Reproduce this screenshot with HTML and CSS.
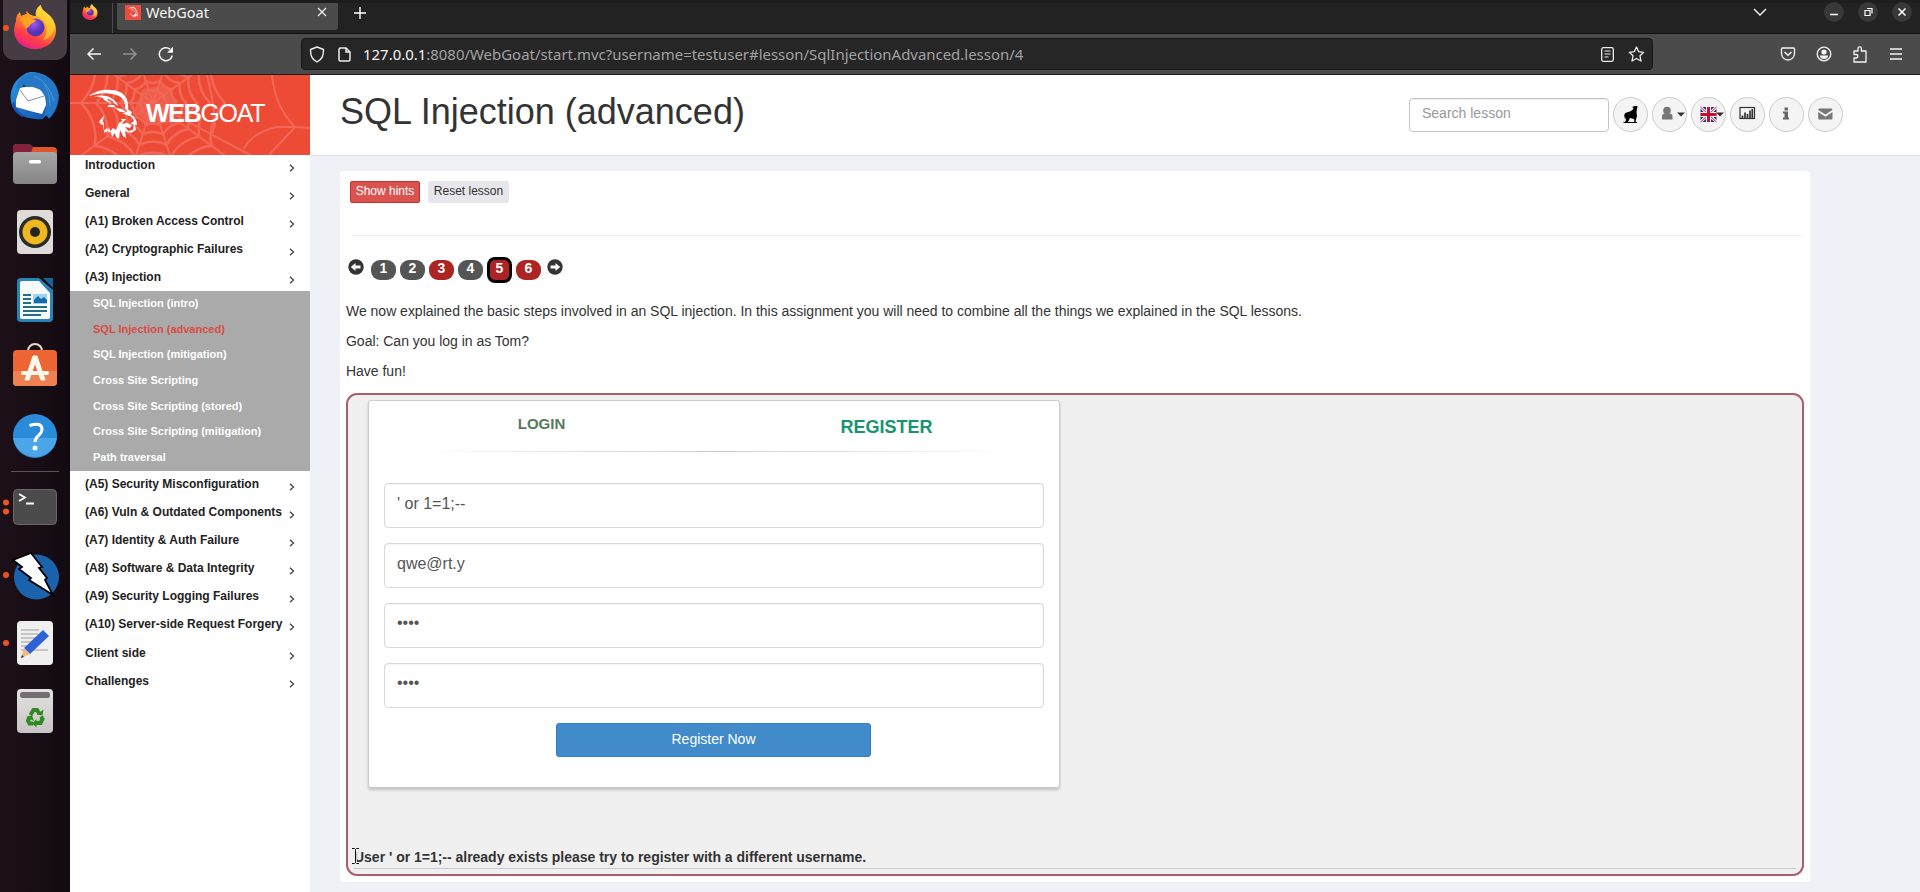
FILE: index.html
```html
<!DOCTYPE html>
<html lang="en">
<head>
<meta charset="utf-8">
<title>WebGoat</title>
<link rel="stylesheet" href="styles.css">
</head>
<body>
<svg class="defs" width="0" height="0" aria-hidden="true">
  <defs>
    <linearGradient id="fox" x1="0.8" y1="0" x2="0.3" y2="1"><stop offset="0" stop-color="#fff14a"/><stop offset=".4" stop-color="#ff9b21"/><stop offset=".75" stop-color="#ff3d48"/><stop offset="1" stop-color="#e5208b"/></linearGradient>
    <radialGradient id="globe" cx=".4" cy=".3"><stop offset="0" stop-color="#a05bf0"/><stop offset="1" stop-color="#5532b8"/></radialGradient>
    <linearGradient id="bird" x1="0" y1="0" x2="1" y2="1"><stop offset="0" stop-color="#2b9be6"/><stop offset="1" stop-color="#1449a8"/></linearGradient>
    <linearGradient id="steel" x1="0" y1="0" x2="0" y2="1"><stop offset="0" stop-color="#a6a6a6"/><stop offset="1" stop-color="#858585"/></linearGradient>
    <linearGradient id="paper" x1="0" y1="0" x2="0" y2="1"><stop offset="0" stop-color="#e4e2e1"/><stop offset="1" stop-color="#c8c5c4"/></linearGradient>
    <symbol id="firefox" viewBox="0 0 42 44">
      <path d="M2 16C2 12 3 9 6 7l1 4c2-1 4-2 6-2-1-1-1-2 0-3 1 3 4 4 7 5h2c-1-5 1-9 5-11 0 5 4 6 8 10 4 3 7 9 7 15 0 11-9 19-21 19S0 36 0 25c0-3 1-6 2-9z" fill="url(#fox)"/>
      <circle cx="21.500" cy="22.500" r="9" fill="url(#globe)"/>
      <path d="M6 14c4-3 8-2 11 0l5 1c-1 3-5 3-6 5-1 3-3 2-4 4-2-4-4-6-6-10z" fill="#ffa125"/>
      <path d="M22 11c0-5 2-9 5-11 0 5 4 6 8 10 3 3 5 7 6 12-2 7-6 12-12 13 4-5 5-12 2-17-2-4-5-6-9-7z" fill="#ffd938" opacity=".65"/>
    </symbol>
    <symbol id="chev" viewBox="0 0 6 8"><path d="M1 .8 4.500 4 1 7.200" fill="none" stroke="#444" stroke-width="1.300"/></symbol>
    <path id="ring" d="M100 0Q76 25 81 59Q47 65 31 95Q0 80-31 95Q-47 65-81 59Q-76 25-100 0Q-76-25-81-59Q-47-65-31-95Q0-80 31-95Q47-65 81-59Q76-25 100 0z" vector-effect="non-scaling-stroke"/>
    <g id="goat">
      <path d="M1 7C9 0 23-1 32 3c6 3 9 9 8 18l-3-1c1-7-3-13-9-14C19 3 10 4 1 7z"/>
      <path d="M5 8c6-2 13-2 18 1 4 2 6 5 7 8l-4-3c-2-3-4-4-7-4l3 4-6-3-1-2c-3-1-6-2-10-1z"/>
      <path d="M21 11l1 4-3 3 7 0 6 5 6 0-4-3-6-1-2-3-5 0 2-2z"/>
      <path d="M38 19l6 4-1 3c4 2 6 6 6 10l-2 0 1 5-5 3-3-2 5-1 1-5-3-2 3-2c-1-3-3-5-5-5l-7-3 5-1z"/>
      <path d="M16 26c-2 4-4 4-5 8l5-1c-1 4 1 7 0 11l4-2 1-4 2 6 1 4 3-4 1 4 3 2 1-9 3 6 3 2-1-7 5 2-5-6 5-1-2-3-6 1 2-4-5 3-3 7-3-2-4 5-2-5-3 3-1-6-3-1 3-3z"/>
      <path d="M33 30l5 0-3 3zM38 34l6 2-2 3-5-1z"/>
    </g>
  </defs>
</svg>
<div class="desktop">
  <nav class="dock">
    <div class="active-app"><svg width="70" height="62" viewBox="0 0 70 62"><rect x="3" y="-14" width="64" height="74" rx="11" fill="#463c44"/><circle cx="6" cy="28" r="3" fill="#e95420"/><use href="#firefox" x="14" y="5" width="42" height="44"/></svg></div>
    <svg width="70" height="69" viewBox="0 62 70 69"><path d="M30 72c13-1 28 8 29 24 0 8-4 18-10 23l-3-4-3 4c-6 1-20-1-26-6-9-9-8-24 0-33 4-4 8-7 13-8z" fill="url(#bird)"/><path d="M20 88l-4 12 0 7 14 4 12 3 4-9-1-14-12-4-14 0z" fill="#fff"/><path d="M20 90l8 11 16-5" stroke="#8795a5" fill="none"/><path d="M16 90c1-10 8-17 19-17 12 1 23 10 23 23 0 9-4 18-9 22l-3-3-3 3c3-7 5-16 1-23-4-9-15-9-20-8-4 1-6 2-8 3z" fill="#2478c6"/><path d="M34 76q14 5 20 25M44 84q6 8 6 22" stroke="#4597dc" fill="none"/><path d="M14 102q2 10 12 14l-4 1q-8-5-10-13z" fill="#1a51ab"/><circle cx="24" cy="86" r="1.300" fill="#123b62"/></svg>
    <svg width="70" height="67" viewBox="0 131 70 67"><path d="M13 148q0-4 4-4h12l4 3h20q4 0 4 4v10H13z" fill="#e0562b"/><path d="M13 148q0-4 4-4h12l4 3-3 8H13z" fill="#82223c"/><rect x="13" y="152" width="44" height="32" rx="4" fill="url(#steel)"/><rect x="29" y="160" width="12" height="3.500" rx="1.500" fill="#fff"/></svg>
    <svg width="70" height="68" viewBox="0 198 70 68"><rect x="17" y="210" width="36" height="44" rx="4" fill="#dedbd8"/><circle cx="35" cy="232" r="16" fill="#2b2b2b"/><circle cx="35" cy="232" r="12.500" fill="#eeb91f"/><circle cx="35" cy="232" r="5" fill="#252525"/></svg>
    <svg width="70" height="67" viewBox="0 266 70 67"><path d="M17 282q0-4 4-4h18l14 12v28q0 4-4 4H21q-4 0-4-4z" fill="#2a83b5"/><path d="M20 283q0-2 2-2h17l11 12v24q0 2-2 2H22q-2 0-2-2z" fill="#f7fafb"/><path d="M43 278h10v10z" fill="#13679a"/><path d="M23 295h8m-8 4h8m-8 4h8m-8 4h24m-24 4h24m-24 4h18" stroke="#246f87" stroke-width="2"/><rect x="33" y="294" width="14" height="10" fill="#9fd3ee"/><path d="M34 303v-3l4-4 3 3 3-2 3 3v3z" fill="#1769aa"/></svg>
    <svg width="70" height="68" viewBox="0 333 70 68"><path d="M28 353v-2a7 7 0 0 1 14 0v2" fill="none" stroke="#e9d8c4" stroke-width="2"/><rect x="13" y="350" width="44" height="36" rx="4" fill="#ed6532"/><path d="M13 371h44v11q0 4-4 4H17q-4 0-4-4z" fill="#ee8051"/><path d="M33 356h4l8 24h-4l-6-17-6 17h-4z" fill="#fff8ec" stroke="#fff8ec"/><path d="M23 373h24" fill="none" stroke="#fff8ec" stroke-width="4" stroke-linecap="round"/></svg>
    <svg width="70" height="70" viewBox="0 401 70 70"><circle cx="35" cy="436" r="22" fill="#2b8bdb"/><path d="M13.200 438h43.600A22 22 0 0 1 13.200 438z" fill="#4aa6e8"/><path d="M29.500 425.500q12.500-4 12.500 4c0 6-7 6-7 12.500" fill="none" stroke="#fff" stroke-width="3"/><circle cx="35" cy="448" r="2.500" fill="#fff"/></svg>
    <div class="dock-rule"></div>
    <svg width="70" height="69" viewBox="0 472 70 69"><rect x="13.500" y="489.500" width="43" height="35" rx="4" fill="#4b4b4b" stroke="#6b6568"/><path d="M19 494l6 3.500-6 3.500M26 503.500h8" fill="none" stroke="#fff" stroke-width="1.800"/><circle cx="6" cy="502.500" r="3" fill="#e95420"/><circle cx="6" cy="511.500" r="3" fill="#e95420"/></svg>
    <svg width="70" height="69" viewBox="0 541 70 69"><circle cx="36.500" cy="577" r="22.500" fill="#1c63ae"/><path d="M13 560l18-7 11 14-3 1 8 10-2 2 8 15-24-15 2-2-12-9 3-2z" fill="#fff" stroke="#000" stroke-width="1.800"/><circle cx="6" cy="575" r="3" fill="#e95420"/></svg>
    <svg width="70" height="67" viewBox="0 610 70 67"><rect x="17" y="621" width="36" height="44" rx="4" fill="#efefef"/><path d="M21 630h18m-18 4h17m-17 4h15m-15 4h12m-12 4h9m-9 4h27" stroke="#b9b9b9" stroke-width="1.300"/><path d="M43 630l6 6-19 18-6-6z" fill="#2f62d4"/><path d="M24 648l6 6-9 4z" fill="#ecb98a"/><path d="M22 655l2 2-3 1z" fill="#333"/><circle cx="6" cy="643" r="3" fill="#e95420"/></svg>
    <svg width="70" height="68" viewBox="0 677 70 68"><rect x="17" y="689" width="36" height="44" rx="4" fill="url(#paper)"/><rect x="20" y="692" width="30" height="6" rx="2.500" fill="#746f72"/><g fill="none" stroke="#2f8a22" stroke-width="4"><path d="M30.500 715l3-5h3.500l2.500 4"/><path d="M41 716.500l1.500 2.500-2 4H36"/><path d="M33 723.500h-3.500l-1.500-3 1.500-3"/></g><path d="M36.500 714.500l6 1 1-6zM36.500 719v8.500l-4.500-4zM26 717l6-2 2 6z" fill="#2f8a22"/></svg>
  </nav>

  <div class="browser">
    <div class="tabstrip">
      <div class="pinned"><svg width="16" height="16"><use href="#firefox" width="16" height="16"/></svg></div>
      <div class="tab">
        <svg class="favicon" width="16" height="15" viewBox="0 0 16 15"><rect width="16" height="15" fill="#ed4d40"/><g fill="#fff" transform="translate(3 2) scale(.21)"><use href="#goat"/></g></svg>
        <span class="tab-name">WebGoat</span>
        <svg width="10" height="10" viewBox="0 0 10 10"><path d="M1 1l8 8M9 1L1 9" stroke="#eee" stroke-width="1.200"/></svg>
      </div>
      <svg class="new-tab" width="12" height="12" viewBox="0 0 12 12"><path d="M6 0v12M0 6h12" stroke="#fff" stroke-width="1.400"/></svg>
      <svg class="tab-list" width="14" height="8" viewBox="0 0 14 8"><path d="M1 1l6 6 6-6" fill="none" stroke="#eee" stroke-width="1.500"/></svg>
      <div class="window-buttons">
        <svg width="20" height="20"><circle cx="10" cy="10" r="10" fill="#383838"/><path d="M6 12.500h8" stroke="#fff" stroke-width="1.500"/></svg>
        <svg width="20" height="20"><circle cx="10" cy="10" r="10" fill="#383838"/><path d="M7 8.500h5v5H7zM9 6.500h5v5" fill="none" stroke="#fff" stroke-width="1.200"/></svg>
        <svg width="20" height="20"><circle cx="10" cy="10" r="10" fill="#383838"/><path d="M6.500 6.500l7 7M13.500 6.500l-7 7" stroke="#fff" stroke-width="1.500"/></svg>
      </div>
    </div>
    <div class="navbar">
      <svg class="back" width="14" height="12" viewBox="0 0 14 12"><path d="M14 6H1M6.500 .5L1 6l5.500 5.500" fill="none" stroke="#f5f5f5" stroke-width="1.500"/></svg>
      <svg class="forward" width="14" height="12" viewBox="0 0 14 12"><path d="M0 6h13M7.500 .5L13 6l-5.500 5.500" fill="none" stroke="#929292" stroke-width="1.500"/></svg>
      <svg class="reload" width="16" height="16" viewBox="0 0 16 16"><path d="M14.200 9.500A6.500 6.500 0 1 1 12 3.200" fill="none" stroke="#f5f5f5" stroke-width="1.500"/><path d="M15 .8v6H9z" fill="#f5f5f5"/></svg>
      <div class="urlbar">
        <svg width="16" height="17" viewBox="0 0 16 17"><path d="M8 1l6.500 2.500c0 6-1 9.500-6.500 12.500C2.500 13 1.500 9.500 1.500 3.500z" fill="none" stroke="#eee" stroke-width="1.400" stroke-linejoin="round"/></svg>
        <svg class="doc" width="13" height="15" viewBox="0 0 13 15"><path d="M2.500 1h5.500l4 4v7.500q0 1.500-1.500 1.500h-8Q1 14 1 12.500v-10Q1 1 2.500 1zM8 1v4h4" fill="none" stroke="#eee" stroke-width="1.500"/></svg>
        <span class="url"><b>127.0.0.1</b>:8080/WebGoat/start.mvc?username=testuser#lesson/SqlInjectionAdvanced.lesson/4</span>
        <svg class="reader" width="13" height="15" viewBox="0 0 13 15"><rect x=".7" y=".7" width="11.600" height="13.600" rx="1.500" fill="none" stroke="#eee" stroke-width="1.300"/><path d="M3.500 4h6m-6 3h6m-6 3h4" stroke="#eee"/></svg>
        <svg width="17" height="16" viewBox="0 0 17 16"><path d="M8.500 1l2.200 4.700 5 .6-3.700 3.500 1 5.200-4.500-2.500L4 15l1-5.200-3.700-3.500 5-.6z" fill="none" stroke="#eee" stroke-width="1.300" stroke-linejoin="round"/></svg>
      </div>
      <div class="tools">
        <svg width="16" height="16" viewBox="0 0 16 16"><path d="M2.500 2h11q1 0 1 1v4.500a6.500 6.500 0 0 1-13 0V3q0-1 1-1z" fill="none" stroke="#f5f5f5" stroke-width="1.300"/><path d="M4.500 6L8 9.300 11.500 6" fill="none" stroke="#f5f5f5" stroke-width="1.500"/></svg>
        <svg width="16" height="16" viewBox="0 0 16 16"><circle cx="8" cy="8" r="6.800" fill="none" stroke="#f5f5f5" stroke-width="1.300"/><circle cx="8" cy="6" r="2.600" fill="#f5f5f5"/><path d="M3.700 9.500h8.600q-.8 3.500-4.300 3.500T3.700 9.500z" fill="#f5f5f5"/></svg>
        <svg width="16" height="17" viewBox="0 0 16 17"><path d="M2 16v-4h2.500a1.800 1.800 0 0 0 0-3.500H2V5h4V2.500a1.700 1.700 0 0 1 3.400 0V5H14v11z" fill="none" stroke="#f5f5f5" stroke-width="1.300" stroke-linejoin="round"/></svg>
        <svg width="16" height="16" viewBox="0 0 16 16"><path d="M2 3h12M2 8h12M2 13h12" stroke="#f5f5f5" stroke-width="1.400"/></svg>
      </div>
    </div>

    <div class="page">
      <aside class="sidebar">
        <div class="brand">
          <svg class="web" width="240" height="80" viewBox="0 0 240 80" aria-hidden="true"><g fill="none" stroke="#f16858" stroke-width="2"><g transform="translate(83 28)"><g stroke-width="2.500"><use href="#ring" transform="scale(.14)"/><use href="#ring" transform="scale(.23)"/><use href="#ring" transform="scale(.33)"/><use href="#ring" transform="scale(.44)"/><use href="#ring" transform="scale(.57)"/><use href="#ring" transform="scale(.72)"/></g><path d="M-100 0H0L140 75M0 0l81 59M0 0l31 95M0 0l-31 95M0 0l-81 59M0 0l-81-59M0 0l-31-95M0 0l31-95M0 0l81-59"/></g><path d="M174 74q6-15 32-22l19 0 15 1M225 52q-20-20-23-52M137 0q8 34 8 50l-5 15M199 80l26-28"/></g><path d="M72 14l22-4 14 16-6 22-22 2-16-14z" fill="#f06554" opacity=".7"/></svg>
          <svg class="goat" width="50" height="51" viewBox="0 0 50 51" fill="#fff"><use href="#goat"/></svg>
          <span class="brand-name"><b>WEB</b>GOAT</span>
        </div>
        <ul class="menu">
          <li>Introduction<svg width="6" height="8"><use href="#chev"/></svg></li>
          <li>General<svg width="6" height="8"><use href="#chev"/></svg></li>
          <li>(A1) Broken Access Control<svg width="6" height="8"><use href="#chev"/></svg></li>
          <li>(A2) Cryptographic Failures<svg width="6" height="8"><use href="#chev"/></svg></li>
          <li>(A3) Injection<svg width="6" height="8"><use href="#chev"/></svg></li>
        </ul>
        <ul class="submenu">
          <li>SQL Injection (intro)</li>
          <li class="selected">SQL Injection (advanced)</li>
          <li>SQL Injection (mitigation)</li>
          <li>Cross Site Scripting</li>
          <li>Cross Site Scripting (stored)</li>
          <li>Cross Site Scripting (mitigation)</li>
          <li>Path traversal</li>
        </ul>
        <ul class="menu rest">
          <li>(A5) Security Misconfiguration<svg width="6" height="8"><use href="#chev"/></svg></li>
          <li>(A6) Vuln &amp; Outdated Components<svg width="6" height="8"><use href="#chev"/></svg></li>
          <li>(A7) Identity &amp; Auth Failure<svg width="6" height="8"><use href="#chev"/></svg></li>
          <li>(A8) Software &amp; Data Integrity<svg width="6" height="8"><use href="#chev"/></svg></li>
          <li>(A9) Security Logging Failures<svg width="6" height="8"><use href="#chev"/></svg></li>
          <li>(A10) Server-side Request Forgery<svg width="6" height="8"><use href="#chev"/></svg></li>
          <li>Client side<svg width="6" height="8"><use href="#chev"/></svg></li>
          <li>Challenges<svg width="6" height="8"><use href="#chev"/></svg></li>
        </ul>
      </aside>

      <div class="content">
        <header class="topbar">
          <h1>SQL Injection (advanced)</h1>
          <div class="actions">
            <input class="search" placeholder="Search lesson">
            <span class="round"><svg width="33" height="33" viewBox="0 0 33 33"><path d="M23.500 8l-1 6 .5 4-1.500 5.500 2 1.500h-3l-.5-4-4-1-2 4h-3l1-2-1-3-1.500 5H23v1H9.500l1-5c-.5-4 0-5 3.500-6 3-.5 5-2 5.500-4l-1.500-1 3-1z" fill="#000"/></svg></span>
            <span class="round"><svg width="33" height="33" viewBox="0 0 33 33"><circle cx="14" cy="12.500" r="3.800" fill="#777"/><path d="M9 21.500v-3q0-3 3-3 2 1.500 4 0 3.500 0 3.500 3v3z" fill="#777"/><path d="M24 14.500h8l-4 4z" fill="#333"/></svg></span>
            <span class="round"><svg width="33" height="33" viewBox="0 0 33 33"><rect x="8.500" y="9" width="16" height="15" fill="#1d3173"/><path d="M8.500 9l16 15M24.500 9l-16 15" stroke="#fff" stroke-width="3"/><path d="M8.500 9l16 15M24.500 9l-16 15" stroke="#c8102e" stroke-width="1"/><path d="M16.500 9v15M8.500 16.500h16" stroke="#fff" stroke-width="5"/><path d="M16.500 9v15M8.500 16.500h16" stroke="#c8102e" stroke-width="3"/><path d="M24 14.500h8l-4 4z" fill="#333"/></svg></span>
            <span class="round"><svg width="33" height="33" viewBox="0 0 33 33"><rect x="9" y="9.500" width="14.500" height="11" fill="none" stroke="#333" stroke-width="1.200"/><path d="M11.500 20v-2.500M14 20v-5.500M16.500 20v-4M19 20v-7.500M21.300 20v-9" stroke="#333" stroke-width="1.700"/></svg></span>
            <span class="round"><svg width="33" height="33" viewBox="0 0 33 33"><path d="M14.500 9.500H18v3h-3.500zM13 13.500h5v6h1v2h-6v-2h1.500v-4H13z" fill="#666"/></svg></span>
            <span class="round"><svg width="33" height="33" viewBox="0 0 33 33"><path d="M10 10.500h12.500q1 0 .8 1.500L16.500 16.500 9.200 12q-.2-1.500.8-1.500z" fill="#777"/><path d="M9.200 14l7.300 4.700 7-4.700v6.500q0 1-1 1H10q-.8 0-.8-1z" fill="#777"/></svg></span>
          </div>
        </header>

        <main class="card">
          <div class="buttons"><button class="hint">Show hints</button><button class="reset">Reset lesson</button></div>
          <div class="divider"></div>
          <div class="pager">
            <svg class="arrow prev" width="16" height="16" viewBox="0 0 16 16"><circle cx="8" cy="8" r="7.700" fill="#333"/><path d="M2.800 8L7.500 4v2.500H12.500v3H7.500V12z" fill="#fff"/></svg>
            <span class="pg">1</span><span class="pg">2</span><span class="pg red">3</span><span class="pg">4</span><span class="pg red current">5</span><span class="pg red">6</span>
            <svg class="arrow next" width="16" height="16" viewBox="0 0 16 16"><circle cx="8" cy="8" r="7.700" fill="#333"/><path d="M13.200 8L8.500 4v2.500H3.500v3H8.500V12z" fill="#fff"/></svg>
          </div>
          <p>We now explained the basic steps involved in an SQL injection. In this assignment you will need to combine all the things we explained in the SQL lessons.</p>
          <p>Goal: Can you log in as Tom?</p>
          <p>Have fun!</p>
          <section class="attack">
            <form class="panel">
              <div class="switch"><span class="login">LOGIN</span><span class="register">REGISTER</span></div>
              <div class="fade"></div>
              <div class="field">' or 1=1;--</div>
              <div class="field">qwe@rt.y</div>
              <div class="field secret">••••</div>
              <div class="field secret">••••</div>
              <button class="submit" type="button">Register Now</button>
            </form>
            <div class="feedback">User ' or 1=1;-- already exists please try to register with a different username.
              <svg class="ibeam" width="7" height="16" viewBox="0 0 7 16"><path d="M0 .5h2.500l1 1 1-1H7M3.500 1.500v13M0 15.500h2.500l1-1 1 1H7" fill="none" stroke="#f8f8f8" stroke-width="2.500"/><path d="M0 .5h2.500l1 1 1-1H7M3.500 1.500v13M0 15.500h2.500l1-1 1 1H7" fill="none" stroke="#111"/></svg>
            </div>
          </section>
        </main>
      </div>
    </div>
  </div>
</div>
</body>
</html>
```

FILE: styles.css
```css
* { box-sizing: border-box; }
body { margin: 0; overflow: hidden; font-family: "Liberation Sans", Arial, sans-serif; font-size: 14px; color: #333; }
svg { display: block; flex: none; }
.defs { position: absolute; }
ul { margin: 0; padding: 0; list-style: none; }
button { font-family: inherit; padding: 0; }
.desktop { display: flex; width: 1920px; height: 892px; overflow: hidden; }

.dock { width: 70px; flex: none; background: linear-gradient(90deg, #1d1119, #170d15 60%, #120a10); }
.dock-rule { height: 1px; margin: 0 11px; background: #5a5358; }

.browser { flex: 1; display: flex; flex-direction: column; min-width: 0; }
.tabstrip { height: 34px; display: flex; align-items: flex-start; background: #222; border-top: 3px solid #1d1d1d; border-bottom: 1px solid #121212; padding-right: 8px; }
.pinned { width: 43px; height: 30px; padding: 1px 0 0 12px; border-right: 1px solid #4a4a4a; }
.tab { width: 221px; height: 27px; margin-left: 4px; background: #4b4b4b; border-radius: 0 0 3px 3px; display: flex; align-items: center; padding: 0 11px 9px 8px; }
.tab-name { flex: 1; margin-left: 5px; color: #f5f5f5; font: 14.5px/18px "Noto Sans", sans-serif; }
.new-tab { margin: 4px auto 0 16px; }
.tab-list { margin: 5px 57px 0 0; }
.window-buttons { display: flex; gap: 14px; margin-top: -1px; }

.navbar { height: 41px; display: flex; align-items: center; background: #4b4b4b; border-bottom: 1px solid #1c1c1c; padding: 0 16px 0 17px; }
.forward { margin-left: 22px; }
.reload { margin-left: 21px; }
.urlbar { width: 1352px; height: 32px; margin-left: 127px; border: 1px solid #191919; border-radius: 4px; background: #262626; display: flex; align-items: center; padding: 0 7px; }
.doc { margin-left: 13px; }
.url { flex: 1; margin-left: 12px; color: #a2a2a2; font: 14.95px/20px "Noto Sans", sans-serif; white-space: nowrap; }
.url b { color: #f5f5f5; font-weight: 400; }
.reader { margin-right: 14px; }
.tools { display: flex; gap: 20px; margin-left: auto; align-items: center; }

.page { flex: 1; display: flex; background: #eff1f6; min-height: 0; }
.sidebar { width: 240px; background: #fff; flex: none; }
.brand { height: 80px; background: #ee4b36; display: flex; align-items: center; padding-left: 18px; position: relative; overflow: hidden; }
.web { position: absolute; left: 0; top: 0; }
.goat { position: relative; margin-bottom: 2px; }
.brand-name { position: relative; margin: 0 0 5px 8px; color: #fff; font-size: 25px; line-height: 30px; letter-spacing: -1.300px; }
.menu { height: 136px; padding-left: 15px; font-size: 12px; font-weight: bold; color: #222; }
.menu li { height: 28.100px; line-height: 20.400px; display: flex; justify-content: space-between; padding-right: 15px; }
.menu svg { margin-top: 9px; }
.menu.rest { height: auto; padding-top: 3px; }
.submenu { height: 180px; background: #aaa; color: #fff; font-size: 11px; font-weight: bold; padding-left: 23px; }
.submenu li { height: 25.700px; line-height: 24.600px; }
.submenu .selected { color: #dc4a43; }

.content { flex: 1; min-width: 0; }
.topbar { height: 81px; background: #fff; border-bottom: 1px solid #e0e4ea; display: flex; justify-content: space-between; padding: 0 77px 0 30px; }
h1 { margin: 16px 0 0; font-size: 36px; line-height: 42px; font-weight: 400; }
.actions { display: flex; gap: 4px; margin-top: 22px; }
.search { width: 200px; height: 34px; margin-top: 1px; border: 1px solid #c5c5c5; border-radius: 4px; padding: 0 12px 4px; font: 14px "Liberation Sans", sans-serif; box-shadow: inset 0 1px 1px #0001; }
.search::placeholder { color: #999; opacity: 1; }
.round { width: 35px; height: 35px; border: 1px solid #ccc; border-radius: 50%; background: #f4f4f5; }

.card { width: 1470px; height: 711px; margin: 15px 0 0 30px; background: #fff; border-radius: 4px; padding: 10px 6px 6px; }
.buttons { display: flex; gap: 8px; padding-left: 4px; }
.buttons button { height: 22px; font-size: 12px; line-height: 16px; padding-bottom: 2px; border-radius: 2px; }
.hint { width: 70px; color: #fff; background: #d9534f; border: 1px solid #c9302c; }
.reset { width: 81px; color: #333; background: #e7e6eb; border: 1px solid #e7e6eb; }
.divider { height: 1px; margin: 32px 2px 0 6px; background: #eee; }
.pager { display: flex; gap: 4px; height: 26px; margin-top: 21px; padding-left: 2px; align-items: center; }
.arrow { margin-bottom: 7px; }
.prev { margin-right: 3px; }
.next { margin-left: 2px; }
.pg { width: 25px; height: 20px; border-radius: 9px; background: #555; color: #fff; font-weight: bold; line-height: 17px; text-align: center; }
.pg.red { background: #ac2424; }
.pg.current { height: 26px; border: 3px solid #000; border-radius: 8px; }
.card p { margin: 0 0 10px; line-height: 20px; letter-spacing: -0.015px; }
.pager + p { margin-top: 18px; }
.attack { height: 483px; margin-top: 12px; border: 2px solid #a9606c; border-radius: 11px; background: #f0f0f0; padding: 5px 6px 5px; }
.panel { width: 692px; height: 388px; margin-left: 14px; background: #fff; border: 1px solid #ccc; border-radius: 3px; box-shadow: 0 2px 3px #0003; padding: 0 15px; }
.switch { display: grid; grid-template-columns: 1fr 1fr; height: 50px; text-align: center; font-weight: bold; }
.login { font-size: 15px; line-height: 46px; color: #567a5c; margin-left: -15px; }
.register { font-size: 18px; line-height: 52px; color: #159570; margin-right: -15px; }
.fade { height: 1px; margin: 0 30px 31px; background: linear-gradient(90deg, transparent, #ccc 50%, transparent); }
.field { height: 45px; margin-bottom: 15px; border: 1px solid #d8d8d8; border-radius: 4px; padding: 0 12px; font-size: 16px; line-height: 40px; color: #555; box-shadow: inset 0 1px 2px #0000000c; }
.secret { line-height: 38px; }
.submit { display: block; width: 315px; height: 34px; margin: 0 auto 0 172px; border: 1px solid #357ebd; border-radius: 3px; background: #428bca; color: #fff; font-size: 14px; padding-bottom: 3px; }
.feedback { position: relative; height: 24px; margin-top: 57px; border-bottom: 1px solid #c8c8c8; font-weight: bold; line-height: 24px; letter-spacing: -0.015px; }
.ibeam { position: absolute; left: -2px; top: 3px; }
```
